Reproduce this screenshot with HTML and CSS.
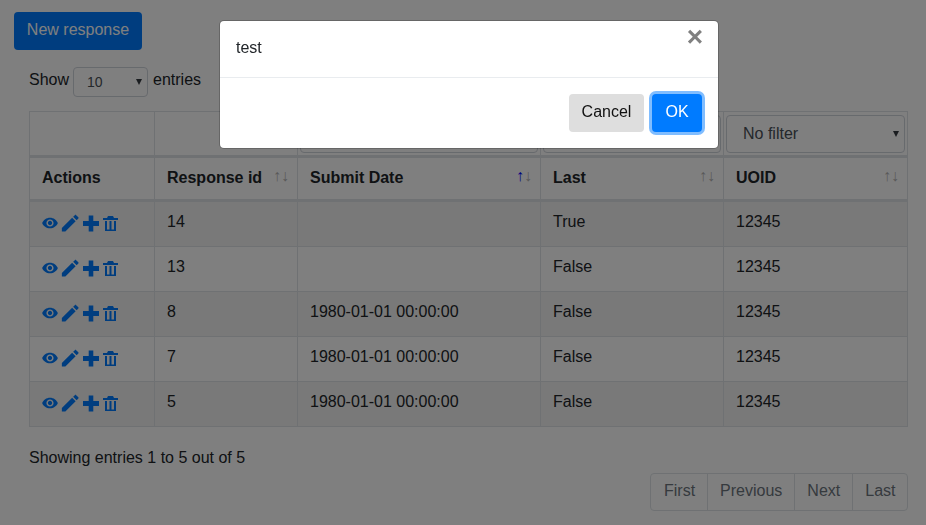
FILE: index.html
```html
<!DOCTYPE html>
<html>
	<head>
		<title>Responses</title>
		<link rel="stylesheet" href="styles.css">
	</head>
	<body>
		<svg class="sprites" width="0" height="0">
			<symbol id="icon-eye" viewBox="-2 -2 28 28"><path d="M12 4.5C7 4.5 2.73 7.61 1 12c1.73 4.39 6 7.5 11 7.5s9.27-3.11 11-7.5c-1.73-4.39-6-7.5-11-7.5zM12 17c-2.76 0-5-2.24-5-5s2.24-5 5-5 5 2.24 5 5-2.24 5-5 5zm0-8c-1.66 0-3 1.34-3 3s1.34 3 3 3 3-1.34 3-3-1.34-3-3-3z"/></symbol>
			<symbol id="icon-edit" viewBox="1 1 21.5 21.5"><path d="M3 17.25V21h3.75L17.81 9.94l-3.75-3.75L3 17.25zM20.71 7.04c.39-.39.39-1.02 0-1.41l-2.34-2.34c-.39-.39-1.02-.39-1.41 0l-1.83 1.83 3.75 3.75 1.83-1.83z"/></symbol>
			<symbol id="icon-add" viewBox="0 0 20 20"><path d="M18 13h-5.700v5.500H7.700V13H2V8h5.700V2.500h4.600V8H18z"/></symbol>
			<symbol id="icon-trash" viewBox="0 0 20 20"><path d="M2 5h4l1-2h5l1 2h4v2H2zM4 8h2v8.500h2.500V8h2v8.500H13V8h2v10H4z"/></symbol>
		</svg>

		<button class="btn btn-new">New response</button>

		<div class="length-row">
			Show
			<span class="length-select">10<i class="caret"></i></span>
			entries
		</div>

		<table class="data-table">
			<colgroup>
				<col class="col-actions"><col class="col-id"><col class="col-date"><col class="col-last"><col class="col-uoid">
			</colgroup>
			<thead>
				<tr class="filter-row">
					<th></th>
					<th></th>
					<th><span class="filter-box"></span></th>
					<th><span class="filter-box"></span></th>
					<th><span class="filter-box">No filter<i class="caret"></i></span></th>
				</tr>
				<tr class="head-row">
					<th>Actions</th>
					<th>Response id<span class="sort"><b>↑</b><b>↓</b></span></th>
					<th>Submit Date<span class="sort"><b class="active">↑</b><b>↓</b></span></th>
					<th>Last<span class="sort"><b>↑</b><b>↓</b></span></th>
					<th>UOID<span class="sort"><b>↑</b><b>↓</b></span></th>
				</tr>
			</thead>
			<tbody>
				<tr class="odd">
					<td><span class="actions"><svg><use href="#icon-eye"/></svg><svg><use href="#icon-edit"/></svg><svg><use href="#icon-add"/></svg><svg><use href="#icon-trash"/></svg></span></td>
					<td>14</td><td></td><td>True</td><td>12345</td>
				</tr>
				<tr>
					<td><span class="actions"><svg><use href="#icon-eye"/></svg><svg><use href="#icon-edit"/></svg><svg><use href="#icon-add"/></svg><svg><use href="#icon-trash"/></svg></span></td>
					<td>13</td><td></td><td>False</td><td>12345</td>
				</tr>
				<tr class="odd">
					<td><span class="actions"><svg><use href="#icon-eye"/></svg><svg><use href="#icon-edit"/></svg><svg><use href="#icon-add"/></svg><svg><use href="#icon-trash"/></svg></span></td>
					<td>8</td><td>1980-01-01 00:00:00</td><td>False</td><td>12345</td>
				</tr>
				<tr>
					<td><span class="actions"><svg><use href="#icon-eye"/></svg><svg><use href="#icon-edit"/></svg><svg><use href="#icon-add"/></svg><svg><use href="#icon-trash"/></svg></span></td>
					<td>7</td><td>1980-01-01 00:00:00</td><td>False</td><td>12345</td>
				</tr>
				<tr class="odd">
					<td><span class="actions"><svg><use href="#icon-eye"/></svg><svg><use href="#icon-edit"/></svg><svg><use href="#icon-add"/></svg><svg><use href="#icon-trash"/></svg></span></td>
					<td>5</td><td>1980-01-01 00:00:00</td><td>False</td><td>12345</td>
				</tr>
			</tbody>
		</table>

		<div class="table-info">Showing entries 1 to 5 out of 5</div>

		<div class="pager">
			<a>First</a><a>Previous</a><a>Next</a><a>Last</a>
		</div>

		<div class="backdrop"></div>

		<div class="modal">
			<div class="modal-body">test<span class="close">×</span></div>
			<div class="modal-footer">
				<button class="btn btn-cancel">Cancel</button>
				<button class="btn btn-ok">OK</button>
			</div>
		</div>
	</body>
</html>
```

FILE: styles.css
```css
* {
	box-sizing: border-box;
}

body {
	margin: 0;
	height: 525px;
	overflow: hidden;
	background: white;
	color: #212529;
	font-family: "Liberation Sans", Arial, sans-serif;
	font-size: 16px;
	line-height: 24px;
}

.sprites {
	position: absolute;
}

.btn {
	display: block;
	height: 38px;
	padding: 0 0 3px;
	border: 1px solid transparent;
	border-radius: 4px;
	font-family: inherit;
	font-size: 16px;
	white-space: nowrap;
}

.btn-new {
	margin: 12px 0 0 14px;
	width: 128px;
	background: #007bff;
	color: white;
}

.length-row {
	display: flex;
	align-items: flex-start;
	gap: 4px;
	height: 30px;
	margin: 17px 0 0 29px;
	line-height: 26px;
}

.length-select {
	position: relative;
	width: 75px;
	height: 30px;
	margin-right: 1px;
	padding-left: 13px;
	border: 1px solid #ced4da;
	border-radius: 4px;
	color: #495057;
	font-size: 14px;
	line-height: 28px;
}

.caret {
	position: absolute;
	right: 5px;
	top: 50%;
	margin-top: -3px;
	border-top: 6px solid #343a40;
	border-left: 3px solid transparent;
	border-right: 3px solid transparent;
}

.data-table {
	width: 878px;
	margin: 14px 0 0 29px;
	border-collapse: collapse;
	table-layout: fixed;
}

.col-actions { width: 125px; }
.col-id { width: 143px; }
.col-date { width: 243px; }
.col-last { width: 183px; }
.col-uoid { width: 184px; }

th, td {
	border: 1px solid #dee2e6;
	padding: 0 12px;
	text-align: left;
}

.filter-row th {
	height: 45px;
	padding: 3px 2px 2px 2px;
	border-bottom-width: 3px;
	font-weight: normal;
}

.filter-box {
	display: block;
	position: relative;
	height: 38px;
	padding-left: 16px;
	border: 1px solid #ced4da;
	border-radius: 4px;
	color: #495057;
	line-height: 36px;
}

.head-row th {
	height: 44px;
	padding-bottom: 1px;
	position: relative;
	border-bottom-width: 3px;
}

.sort {
	position: absolute;
	right: 8px;
	top: 6px;
	display: flex;
	font-size: 16px;
	font-weight: normal;
	color: #b3b3b3;
}

.sort b {
	font-weight: normal;
}

.sort .active {
	color: #0000ff;
}

td {
	height: 45px;
	padding-bottom: 4px;
}

tbody tr:first-child td {
	height: 46px;
}

.odd td {
	background: #f2f2f2;
}

.actions {
	display: flex;
	margin: 2px 0 0 -2px;
}

.actions svg {
	width: 20px;
	height: 20px;
	fill: #007bff;
}

.actions svg:nth-child(3) {
	margin-left: 1px;
}

.table-info {
	margin: 19px 0 0 29px;
}

.pager {
	display: flex;
	width: 258px;
	height: 38px;
	margin: 3px 0 0 650px;
	border: 1px solid #dee2e6;
	border-radius: 4px;
	color: #6c757d;
}

.pager a {
	padding: 0 12px;
	line-height: 33px;
	border-left: 1px solid #dee2e6;
}

.pager a:first-child {
	padding: 0 12px 0 13px;
	border-left: 0;
}

.backdrop {
	position: fixed;
	inset: 0;
	background: rgba(0, 0, 0, .5);
}

.modal {
	position: fixed;
	left: 220px;
	top: 21px;
	width: 498px;
	height: 127px;
	background: white;
	border-radius: 4px;
	box-shadow: 0 0 0 1px rgba(0, 0, 0, .2);
}

.modal-body {
	position: relative;
	height: 57px;
	padding: 15px 16px;
	border-bottom: 1px solid #e9ecef;
}

.close {
	position: absolute;
	right: 15px;
	top: 1px;
	font-size: 28px;
	line-height: 30px;
	font-weight: bold;
	color: #808080;
}

.modal-footer {
	display: flex;
	justify-content: flex-end;
	gap: 8px;
	padding: 16px;
}

.btn-cancel {
	width: 75px;
	background: #dedede;
	color: #111;
}

.btn-ok {
	width: 50px;
	background: #007bff;
	color: white;
	box-shadow: 0 0 0 3px #80bdff;
}
```
